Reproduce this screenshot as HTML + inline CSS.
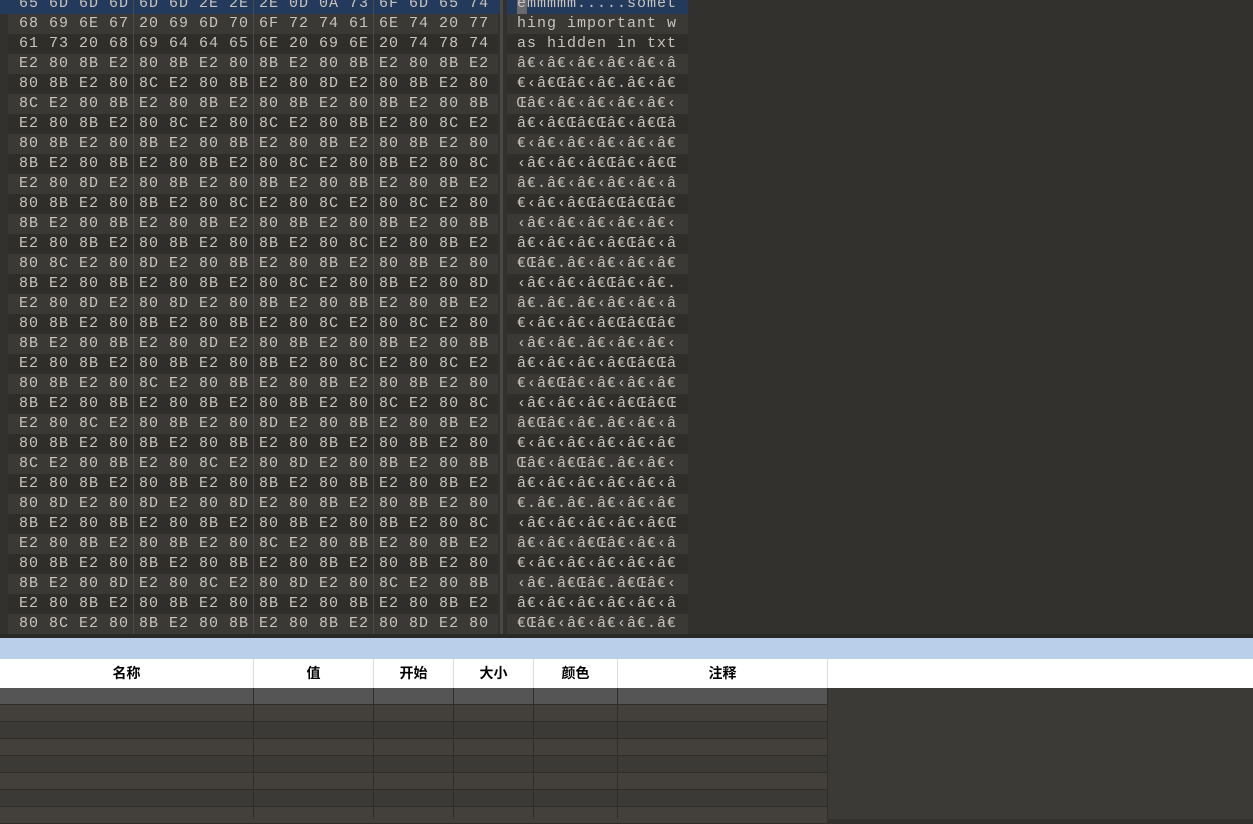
<!DOCTYPE html>
<html><head><meta charset="utf-8"><style>
body{margin:0;width:1253px;height:819px;overflow:hidden;background:#33312d;position:relative;font-family:"Liberation Mono",monospace}
.r{position:absolute;left:8px;width:490px;height:20px}
.a{position:absolute;left:507px;width:181px;height:20px}
.t{position:absolute;font-size:15px;line-height:20px;letter-spacing:1px;white-space:pre;color:#c8c4bc}
.e{background:#3a3935}.o{background:#2f2e2a}
.vs{position:absolute;top:0;width:1px;height:634px;background:#4d4b47}
.hd{position:absolute;top:659px;left:0;width:1253px;height:29px;background:#fff}
.hc{position:absolute;top:659px;height:29px;text-align:center;font:bold 14px "Liberation Sans","Noto Sans CJK SC",sans-serif;line-height:29px;color:#000;border-right:1px solid #ddd;box-sizing:border-box}
.tr{position:absolute;left:0;width:827px;height:16px;border-bottom:1px solid #2e2d2a}
.cl{position:absolute;top:688px;width:1px;height:131px;background:#2e2d2a}
</style></head><body>
<div style="position:absolute;left:0;top:-6px;width:500px;height:20px;background:#243a5c"></div>
<div style="position:absolute;left:507px;top:-6px;width:181px;height:20px;background:#243a5c"></div>
<div style="position:absolute;left:500px;top:0;width:3px;height:634px;background:#4a4845"></div>

<div class="r e" style="top:14px"></div><div class="a e" style="top:14px"></div>
<div class="r e" style="top:54px"></div><div class="a e" style="top:54px"></div>
<div class="r e" style="top:94px"></div><div class="a e" style="top:94px"></div>
<div class="r e" style="top:134px"></div><div class="a e" style="top:134px"></div>
<div class="r e" style="top:174px"></div><div class="a e" style="top:174px"></div>
<div class="r e" style="top:214px"></div><div class="a e" style="top:214px"></div>
<div class="r e" style="top:254px"></div><div class="a e" style="top:254px"></div>
<div class="r e" style="top:294px"></div><div class="a e" style="top:294px"></div>
<div class="r e" style="top:334px"></div><div class="a e" style="top:334px"></div>
<div class="r e" style="top:374px"></div><div class="a e" style="top:374px"></div>
<div class="r e" style="top:414px"></div><div class="a e" style="top:414px"></div>
<div class="r e" style="top:454px"></div><div class="a e" style="top:454px"></div>
<div class="r e" style="top:494px"></div><div class="a e" style="top:494px"></div>
<div class="r e" style="top:534px"></div><div class="a e" style="top:534px"></div>
<div class="r e" style="top:574px"></div><div class="a e" style="top:574px"></div>
<div class="r e" style="top:614px"></div><div class="a e" style="top:614px"></div>
<div class="r o" style="top:34px"></div><div class="a o" style="top:34px"></div>
<div class="r o" style="top:74px"></div><div class="a o" style="top:74px"></div>
<div class="r o" style="top:114px"></div><div class="a o" style="top:114px"></div>
<div class="r o" style="top:154px"></div><div class="a o" style="top:154px"></div>
<div class="r o" style="top:194px"></div><div class="a o" style="top:194px"></div>
<div class="r o" style="top:234px"></div><div class="a o" style="top:234px"></div>
<div class="r o" style="top:274px"></div><div class="a o" style="top:274px"></div>
<div class="r o" style="top:314px"></div><div class="a o" style="top:314px"></div>
<div class="r o" style="top:354px"></div><div class="a o" style="top:354px"></div>
<div class="r o" style="top:394px"></div><div class="a o" style="top:394px"></div>
<div class="r o" style="top:434px"></div><div class="a o" style="top:434px"></div>
<div class="r o" style="top:474px"></div><div class="a o" style="top:474px"></div>
<div class="r o" style="top:514px"></div><div class="a o" style="top:514px"></div>
<div class="r o" style="top:554px"></div><div class="a o" style="top:554px"></div>
<div class="r o" style="top:594px"></div><div class="a o" style="top:594px"></div>

<div class="vs" style="left:133px"></div><div class="vs" style="left:253px"></div><div class="vs" style="left:373px"></div>
<div style="position:absolute;left:0;top:634px;width:1253px;height:4px;background:#2a2926"></div>
<div style="position:absolute;left:0;top:638px;width:1253px;height:21px;background:#bad0ea"></div>
<div class="hd"></div>
<div class="hc" style="left:0;width:254px">名称</div>
<div class="hc" style="left:254px;width:120px">值</div>
<div class="hc" style="left:374px;width:80px">开始</div>
<div class="hc" style="left:454px;width:80px">大小</div>
<div class="hc" style="left:534px;width:84px">颜色</div>
<div class="hc" style="left:618px;width:210px">注释</div>
<div style="position:absolute;left:827px;top:688px;width:426px;height:131px;background:#3b3a36"></div>
<div class="tr" style="top:688px;background:#555"></div>
<div class="tr" style="top:705px;background:#433f3a"></div>
<div class="tr" style="top:722px;background:#3b3a36"></div>
<div class="tr" style="top:739px;background:#433f3a"></div>
<div class="tr" style="top:756px;background:#3b3a36"></div>
<div class="tr" style="top:773px;background:#433f3a"></div>
<div class="tr" style="top:790px;background:#3b3a36"></div>
<div class="tr" style="top:807px;background:#433f3a"></div>
<div class="cl" style="left:253px"></div><div class="cl" style="left:373px"></div><div class="cl" style="left:453px"></div><div class="cl" style="left:533px"></div><div class="cl" style="left:617px"></div><div class="cl" style="left:827px"></div>

<div class="t" style="left:19px;top:-6px">65 6D 6D 6D 6D 6D 2E 2E 2E 0D 0A 73 6F 6D 65 74
68 69 6E 67 20 69 6D 70 6F 72 74 61 6E 74 20 77
61 73 20 68 69 64 64 65 6E 20 69 6E 20 74 78 74
E2 80 8B E2 80 8B E2 80 8B E2 80 8B E2 80 8B E2
80 8B E2 80 8C E2 80 8B E2 80 8D E2 80 8B E2 80
8C E2 80 8B E2 80 8B E2 80 8B E2 80 8B E2 80 8B
E2 80 8B E2 80 8C E2 80 8C E2 80 8B E2 80 8C E2
80 8B E2 80 8B E2 80 8B E2 80 8B E2 80 8B E2 80
8B E2 80 8B E2 80 8B E2 80 8C E2 80 8B E2 80 8C
E2 80 8D E2 80 8B E2 80 8B E2 80 8B E2 80 8B E2
80 8B E2 80 8B E2 80 8C E2 80 8C E2 80 8C E2 80
8B E2 80 8B E2 80 8B E2 80 8B E2 80 8B E2 80 8B
E2 80 8B E2 80 8B E2 80 8B E2 80 8C E2 80 8B E2
80 8C E2 80 8D E2 80 8B E2 80 8B E2 80 8B E2 80
8B E2 80 8B E2 80 8B E2 80 8C E2 80 8B E2 80 8D
E2 80 8D E2 80 8D E2 80 8B E2 80 8B E2 80 8B E2
80 8B E2 80 8B E2 80 8B E2 80 8C E2 80 8C E2 80
8B E2 80 8B E2 80 8D E2 80 8B E2 80 8B E2 80 8B
E2 80 8B E2 80 8B E2 80 8B E2 80 8C E2 80 8C E2
80 8B E2 80 8C E2 80 8B E2 80 8B E2 80 8B E2 80
8B E2 80 8B E2 80 8B E2 80 8B E2 80 8C E2 80 8C
E2 80 8C E2 80 8B E2 80 8D E2 80 8B E2 80 8B E2
80 8B E2 80 8B E2 80 8B E2 80 8B E2 80 8B E2 80
8C E2 80 8B E2 80 8C E2 80 8D E2 80 8B E2 80 8B
E2 80 8B E2 80 8B E2 80 8B E2 80 8B E2 80 8B E2
80 8D E2 80 8D E2 80 8D E2 80 8B E2 80 8B E2 80
8B E2 80 8B E2 80 8B E2 80 8B E2 80 8B E2 80 8C
E2 80 8B E2 80 8B E2 80 8C E2 80 8B E2 80 8B E2
80 8B E2 80 8B E2 80 8B E2 80 8B E2 80 8B E2 80
8B E2 80 8D E2 80 8C E2 80 8D E2 80 8C E2 80 8B
E2 80 8B E2 80 8B E2 80 8B E2 80 8B E2 80 8B E2
80 8C E2 80 8B E2 80 8B E2 80 8B E2 80 8D E2 80</div>
<div style="position:absolute;left:517px;top:-6px;width:10px;height:20px;background:#6a6a6a"></div>
<div class="t" style="left:517px;top:-6px">emmmmm.....somet
hing important w
as hidden in txt
â€‹â€‹â€‹â€‹â€‹â
€‹â€Œâ€‹â€.â€‹â€
Œâ€‹â€‹â€‹â€‹â€‹
â€‹â€Œâ€Œâ€‹â€Œâ
€‹â€‹â€‹â€‹â€‹â€
‹â€‹â€‹â€Œâ€‹â€Œ
â€.â€‹â€‹â€‹â€‹â
€‹â€‹â€Œâ€Œâ€Œâ€
‹â€‹â€‹â€‹â€‹â€‹
â€‹â€‹â€‹â€Œâ€‹â
€Œâ€.â€‹â€‹â€‹â€
‹â€‹â€‹â€Œâ€‹â€.
â€.â€.â€‹â€‹â€‹â
€‹â€‹â€‹â€Œâ€Œâ€
‹â€‹â€.â€‹â€‹â€‹
â€‹â€‹â€‹â€Œâ€Œâ
€‹â€Œâ€‹â€‹â€‹â€
‹â€‹â€‹â€‹â€Œâ€Œ
â€Œâ€‹â€.â€‹â€‹â
€‹â€‹â€‹â€‹â€‹â€
Œâ€‹â€Œâ€.â€‹â€‹
â€‹â€‹â€‹â€‹â€‹â
€.â€.â€.â€‹â€‹â€
‹â€‹â€‹â€‹â€‹â€Œ
â€‹â€‹â€Œâ€‹â€‹â
€‹â€‹â€‹â€‹â€‹â€
‹â€.â€Œâ€.â€Œâ€‹
â€‹â€‹â€‹â€‹â€‹â
€Œâ€‹â€‹â€‹â€.â€</div>
</body></html>
